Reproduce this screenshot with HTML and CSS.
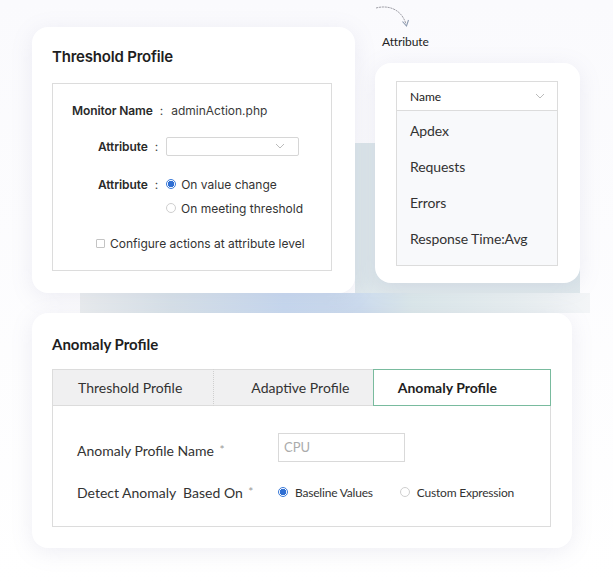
FILE: index.html
```html
<!DOCTYPE html>
<html>
<head>
<meta charset="utf-8">
<link rel="stylesheet" href="styles.css">
</head>
<body>
<div class="page">
  <div class="deco deco-v"></div>
  <div class="deco deco-h"></div>

  <div class="top-row">
    <section class="card card-threshold">
      <h2 class="title-puvi">Threshold Profile</h2>
      <div class="inner-box">
        <div class="row row-monitor">
          <span class="lbl">Monitor Name</span><span class="colon">:</span><span class="val">adminAction.php</span>
        </div>
        <div class="row row-attr">
          <span class="lbl">Attribute</span><span class="colon">:</span>
          <span class="select">
            <svg class="chev" width="10" height="6" viewBox="0 0 10 6"><path d="M1 1 L5 5 L9 1" fill="none" stroke="#aaa" stroke-width="0.8"/></svg>
          </span>
        </div>
        <div class="row row-attr row-radio">
          <span class="lbl">Attribute</span><span class="colon">:</span>
          <span class="radio on"></span><span class="opt">On value change</span>
        </div>
        <div class="row row-radio2">
          <span class="radio"></span><span class="opt">On meeting threshold</span>
        </div>
        <div class="row row-check">
          <span class="check"></span><span class="opt">Configure actions at attribute level</span>
        </div>
      </div>
    </section>

    <div class="right-col">
      <div class="annot">
        <svg class="arrow" width="40" height="28" viewBox="0 0 40 28">
          <path d="M1 3 C12 0 26 3 31 19" fill="none" stroke="#a0a0a8" stroke-width="1" stroke-dasharray="2.2 0.7"/>
          <path d="M27.5 16.5 L31.5 21 L33.5 15" fill="none" stroke="#8c9ab0" stroke-width="1.1"/>
        </svg>
        <span class="annot-label">Attribute</span>
      </div>
      <section class="card card-list">
        <div class="list-box">
          <div class="list-head">
            <span>Name</span>
            <svg class="chev" width="10" height="6" viewBox="0 0 10 6"><path d="M1 1 L5 5 L9 1" fill="none" stroke="#aaa" stroke-width="0.8"/></svg>
          </div>
          <ul class="list-items">
            <li>Apdex</li>
            <li>Requests</li>
            <li>Errors</li>
            <li>Response Time:Avg</li>
          </ul>
        </div>
      </section>
    </div>
  </div>

  <section class="card card-anomaly">
    <h2 class="title-lato">Anomaly Profile</h2>
    <div class="tab-box">
      <div class="tabs">
        <div class="tab tab-1">Threshold Profile</div>
        <div class="tab tab-2">Adaptive Profile</div>
        <div class="tab tab-3 active">Anomaly Profile</div>
      </div>
      <div class="form">
        <div class="frow frow-1">
          <span class="flbl">Anomaly Profile Name <span class="req">*</span></span>
          <span class="input">CPU</span>
        </div>
        <div class="frow frow-2">
          <span class="flbl">Detect Anomaly&nbsp; Based On <span class="req">*</span></span>
          <span class="radios">
            <span class="ropt"><span class="radio on"></span><span>Baseline Values</span></span>
            <span class="ropt"><span class="radio"></span><span>Custom Expression</span></span>
          </span>
        </div>
      </div>
    </div>
  </section>
</div>
</body>
</html>
```

FILE: styles.css
```css
* { box-sizing: border-box; }
html, body { margin: 0; padding: 0; background: #fff; }
body { width: 613px; height: 585px; overflow: hidden; font-family: "Lato", "Inter", sans-serif; color: #333; }

.page {
  position: relative;
  width: 613px;
  height: 585px;
  padding: 27px 0 0 32px;
  background: linear-gradient(180deg, #fafafd 0%, #ffffff 100%);
}

.deco { position: absolute; z-index: 0; }
.deco-v {
  left: 355px; top: 143px; width: 225px; height: 170px;
  background: linear-gradient(180deg, #dce6ea 0%, #dce6ea 80%, #e3ebee 100%);
}
.deco-h {
  left: 80px; top: 293px; width: 510px; height: 20px;
  background: linear-gradient(90deg, #eceff0 0%, #d9e3ea 18%, #c9daf0 40%, #cddcee 55%, #dbe7ea 65%, #e7eef0 85%, #f3f5f7 100%);
}

.card {
  position: relative;
  z-index: 1;
  background: #fff;
  border-radius: 16px;
  box-shadow: 0 4px 22px rgba(120, 120, 170, 0.13);
}

h2 { margin: 0; font-size: 15px; line-height: 20px; color: #1e1e1e; }
.title-puvi { font-family: "Inter", sans-serif; font-weight: 600; letter-spacing: -0.2px; }
.title-lato { font-family: "Lato", sans-serif; font-weight: 700; }

.top-row { display: flex; gap: 20px; align-items: flex-start; }

/* Threshold card */
.card-threshold {
  width: 323px; height: 266px;
  padding: 20px 23px 22px 20px;
  font-family: "Inter", sans-serif;
}
.inner-box {
  margin-top: 16px;
  height: 188px;
  border: 1px solid #dcdcdc;
  font-size: 12px;
  color: #333;
  padding-top: 16px;
}
.row { display: flex; align-items: center; height: 20px; }
.lbl { font-weight: 600; color: #2a2a2a; letter-spacing: -0.1px; }
.colon { margin: 0 8px 0 7px; color: #444; }
.val { color: #3a3a3a; }
.row-monitor { padding-left: 19px; }
.row-attr { padding-left: 45px; margin-top: 16px; }
.row-radio { margin-top: 18px; }
.row-radio2 { padding-left: 113px; margin-top: 4px; }
.row-check { padding-left: 43px; margin-top: 15px; }
.opt { color: #333; }
.select {
  position: relative;
  width: 133px; height: 19px;
  border: 1px solid #d6d6d6;
  border-radius: 2px;
  display: flex; align-items: center; justify-content: flex-end;
  padding-right: 13px;
}
.radio {
  display: inline-block;
  width: 10px; height: 10px;
  border-radius: 50%;
  border: 1px solid #cfcfcf;
  background: #fff;
  margin-right: 5px;
  flex: none;
}
.radio.on {
  border: 1px solid #3b7ad8;
  background: radial-gradient(circle, #2f6fd3 0 3px, #fff 3.2px);
}
.check {
  display: inline-block;
  width: 9px; height: 9px;
  border: 1px solid #c4c4c4;
  border-radius: 1px;
  margin-right: 5px;
}

/* Right column */
.right-col { width: 205px; margin-top: -22px; }
.annot { position: relative; height: 58px; }
.arrow { position: absolute; left: 0; top: 0; }
.annot-label {
  position: absolute; left: 7px; top: 29px;
  font-family: "Lato", sans-serif; font-size: 12px; color: #222; letter-spacing: -0.1px;
}
.card-list {
  width: 205px; height: 220px;
  padding: 18px 22px 17px 21px;
}
.list-box {
  height: 185px;
  border: 1px solid #dcdcdc;
  background: #f8f9fb;
}
.list-head {
  height: 29px;
  background: #fff;
  border-bottom: 1px solid #dcdcdc;
  display: flex; align-items: center; justify-content: space-between;
  padding: 0 12px 0 13px;
  font-size: 12px; color: #222;
}
.list-items { list-style: none; margin: 0; padding: 2px 0 0 13px; }
.list-items li { height: 36px; line-height: 36px; font-size: 14px; color: #333; letter-spacing: -0.1px; }

/* Anomaly card */
.card-anomaly {
  margin-top: 20px;
  width: 540px; height: 235px;
  padding: 21px 21px 21px 20px;
}
.tab-box {
  margin-top: 15px;
  width: 499px; height: 158px;
  border: 1px solid #dcdcdc;
}
.tabs { display: flex; height: 37px; margin: -1px -1px 0 -1px; }
.tab {
  height: 37px;
  line-height: 36px;
  font-size: 14px;
  color: #333;
  background: #f0f0f1;
  border-bottom: 1px solid #dcdcdc;
  border-top: 1px solid #dcdcdc;
}
.tab-1 { width: 163px; padding-left: 25px; border-left: 1px solid #dcdcdc; border-right: 1px dotted #cfcfcf; }
.tab-2 { width: 159px; padding-left: 37px; }
.tab-3 { width: 179px; padding-left: 24px; }
.tab.active {
  background: #fff;
  border: 1px solid #79bb9e;
  font-weight: 700;
  color: #1e1e1e;
}
.form { padding: 27px 0 0 24px; }
.frow { display: flex; align-items: center; }
.flbl { width: 201px; font-size: 14px; color: #333; }
.req { color: #999; font-size: 12px; margin-left: 2px; vertical-align: 2px; }
.frow-1 { height: 29px; }
.frow-1 .flbl { padding-top: 5px; }
.frow-2 { margin-top: 20px; height: 20px; }
.input {
  width: 127px; height: 29px;
  border: 1px solid #d9d9d9;
  padding-left: 5px;
  line-height: 27px;
  font-size: 13px;
  color: #ababab;
}
.radios { display: flex; gap: 27px; font-size: 12px; color: #333; letter-spacing: -0.2px; }
.ropt { display: flex; align-items: center; }
.ropt .radio { margin-right: 7px; }
```
